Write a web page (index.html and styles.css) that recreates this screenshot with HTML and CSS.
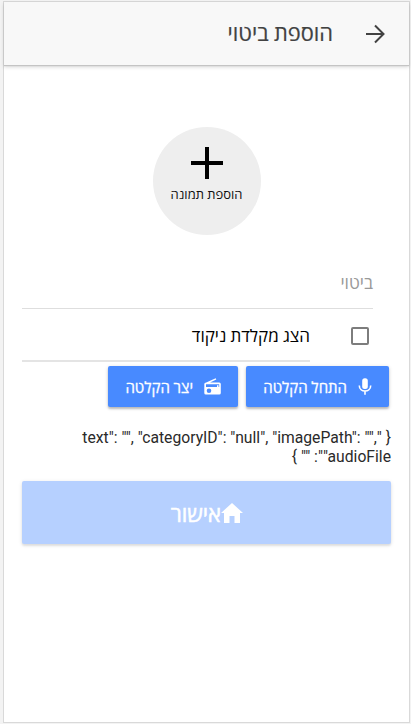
FILE: index.html
```html
<!DOCTYPE html>
<html lang="he" dir="rtl">
<head>
<meta charset="utf-8">
<title>הוספת ביטוי</title>
<link rel="stylesheet" href="styles.css">
</head>
<body>
<div class="device">
  <header class="toolbar">
    <svg class="back" viewBox="0 0 20 20"><path d="M1 10H18M10 1.5L18.5 10L10 18.5"/></svg>
    <h1 class="title"><span>הוספת ביטוי</span></h1>
  </header>
  <main class="content">
    <div class="photo">
      <svg class="plus" viewBox="0 0 32 32"><path d="M16 0V32M0 16H32"/></svg>
      <span class="photo-label">הוספת תמונה</span>
    </div>
    <div class="field"><span>ביטוי</span></div>
    <div class="check-row">
      <span class="checkbox"></span>
      <div class="check-label"><span>הצג מקלדת ניקוד</span></div>
    </div>
    <div class="buttons">
      <button class="btn start">
        <svg class="mic" viewBox="0 0 14 17"><rect x="4.2" y="0.3" width="5.6" height="10.6" rx="2.5" fill="#fff"/><path d="M1.3 7.4C1.3 14.8 12.7 14.8 12.7 7.4M7 12.8V16.8" fill="none" stroke="#fff" stroke-width="1.6"/></svg>
        <span>התחל הקלטה</span>
      </button>
      <button class="btn create">
        <svg class="radio" viewBox="0 0 17 17"><path fill="#fff" fill-rule="evenodd" d="M2.2 4.4L11.7.3L12.3 1.6L6 4.4H15.2Q16.8 4.4 16.8 6V15Q16.8 16.6 15.2 16.6H1.9Q.3 16.6.3 15V6Q.3 4.8 2.2 4.4ZM2 6.2V9H13V7.3H14.5V9H15.2V6.2ZM5 10.4A2.3 2.3 0 1 0 5 15A2.3 2.3 0 1 0 5 10.4Z"/></svg>
        <span>יצר הקלטה</span>
      </button>
    </div>
    <p class="json">{ "text": "", "categoryID": "null", "imagePath": "", "audioFile": "" }</p>
    <button class="submit">
      <svg class="home" viewBox="0 0 22 20"><path fill="#fff" d="M11 0L22 10H19V20H13.5V13H8.5V20H3V10H0Z"/></svg>
      <span>אישור</span>
    </button>
  </main>
</div>
</body>
</html>
```
FILE: styles.css
```css
* { box-sizing: border-box; }
body {
  margin: 0;
  height: 724px;
  padding: 1px 1px 1px 3px;
  background: #f3f3f3;
  font-family: Roboto, "Open Sans", sans-serif;
  overflow: hidden;
}
.device {
  width: 407px;
  height: 722px;
  border: 1px solid #d9d9d9;
  background: #fff;
}
.toolbar {
  height: 63px;
  display: flex;
  align-items: center;
  padding-right: 24px;
  background: #f8f8f8;
  box-shadow: 0 1px 1px #c4c4c4, 0 2px 4px rgba(0,0,0,.16);
}
.back { width: 20px; height: 20px; fill: none; stroke: #424242; stroke-width: 2; }
.title { margin: 0 32px 0 0; font-size: 21.8px; line-height: 30px; font-weight: 500; color: #424242; -webkit-text-stroke: .2px #424242; }
.content { padding: 62px 18px 0; }
.photo {
  width: 108px;
  height: 108px;
  margin: 0 auto;
  border-radius: 50%;
  background: #eee;
  display: flex;
  flex-direction: column;
  align-items: center;
  padding-top: 20px;
}
.plus { width: 32px; height: 32px; stroke: #000; stroke-width: 4; }
.photo-label { font-size: 13px; line-height: 20px; margin-top: 6px; color: #111; white-space: nowrap; }
.field {
  height: 74px;
  margin-right: 18px;
  padding-top: 36px;
  border-bottom: 1px solid #dedede;
  font-size: 17.3px;
  line-height: 24px;
  color: #999;
}
.check-row { height: 53px; display: flex; padding-right: 22px; }
.checkbox { width: 18px; height: 18px; margin-top: 18px; border: 2px solid #7d7d7d; border-radius: 2px; }
.check-label {
  flex: 1;
  margin-right: 41px;
  padding-top: 15px;
  border-bottom: 2px solid #e4e4e4;
  font-size: 17px;
  line-height: 24px;
  color: #000;
}
.buttons { display: flex; gap: 8px; padding: 4px 2px 0 0; }
.btn, .submit {
  border: 0;
  margin: 0;
  font-family: inherit;
  color: #fff;
  display: flex;
  align-items: center;
  white-space: nowrap;
}
.btn {
  height: 41px;
  border-radius: 2px;
  background: #488aff;
  box-shadow: 0 2px 2px rgba(0,0,0,.2), 0 1px 4px rgba(0,0,0,.14);
  font-size: 15px;
  font-weight: 500;
  -webkit-text-stroke: .3px #fff;
}
.start { width: 143px; padding: 0 17px 0 0; gap: 11px; }
.create { width: 130px; padding: 0 17px 0 0; gap: 11px; }
.mic { width: 14px; height: 17px; }
.radio { width: 17px; height: 17px; }
.json { margin: 21px 0 0; font-size: 15.7px; line-height: 19px; color: #2a2a2a; }
.submit {
  width: 369px;
  height: 63px;
  margin-top: 15px;
  padding: 0 148px 0 0;
  border-radius: 2px;
  background: #b6d0ff;
  box-shadow: 0 2px 2px rgba(0,0,0,.08), 0 1px 4px rgba(0,0,0,.1);
  font-size: 22px;
  font-weight: 500;
  -webkit-text-stroke: .5px #fff;
}
.home { width: 22px; height: 20px; }
```
